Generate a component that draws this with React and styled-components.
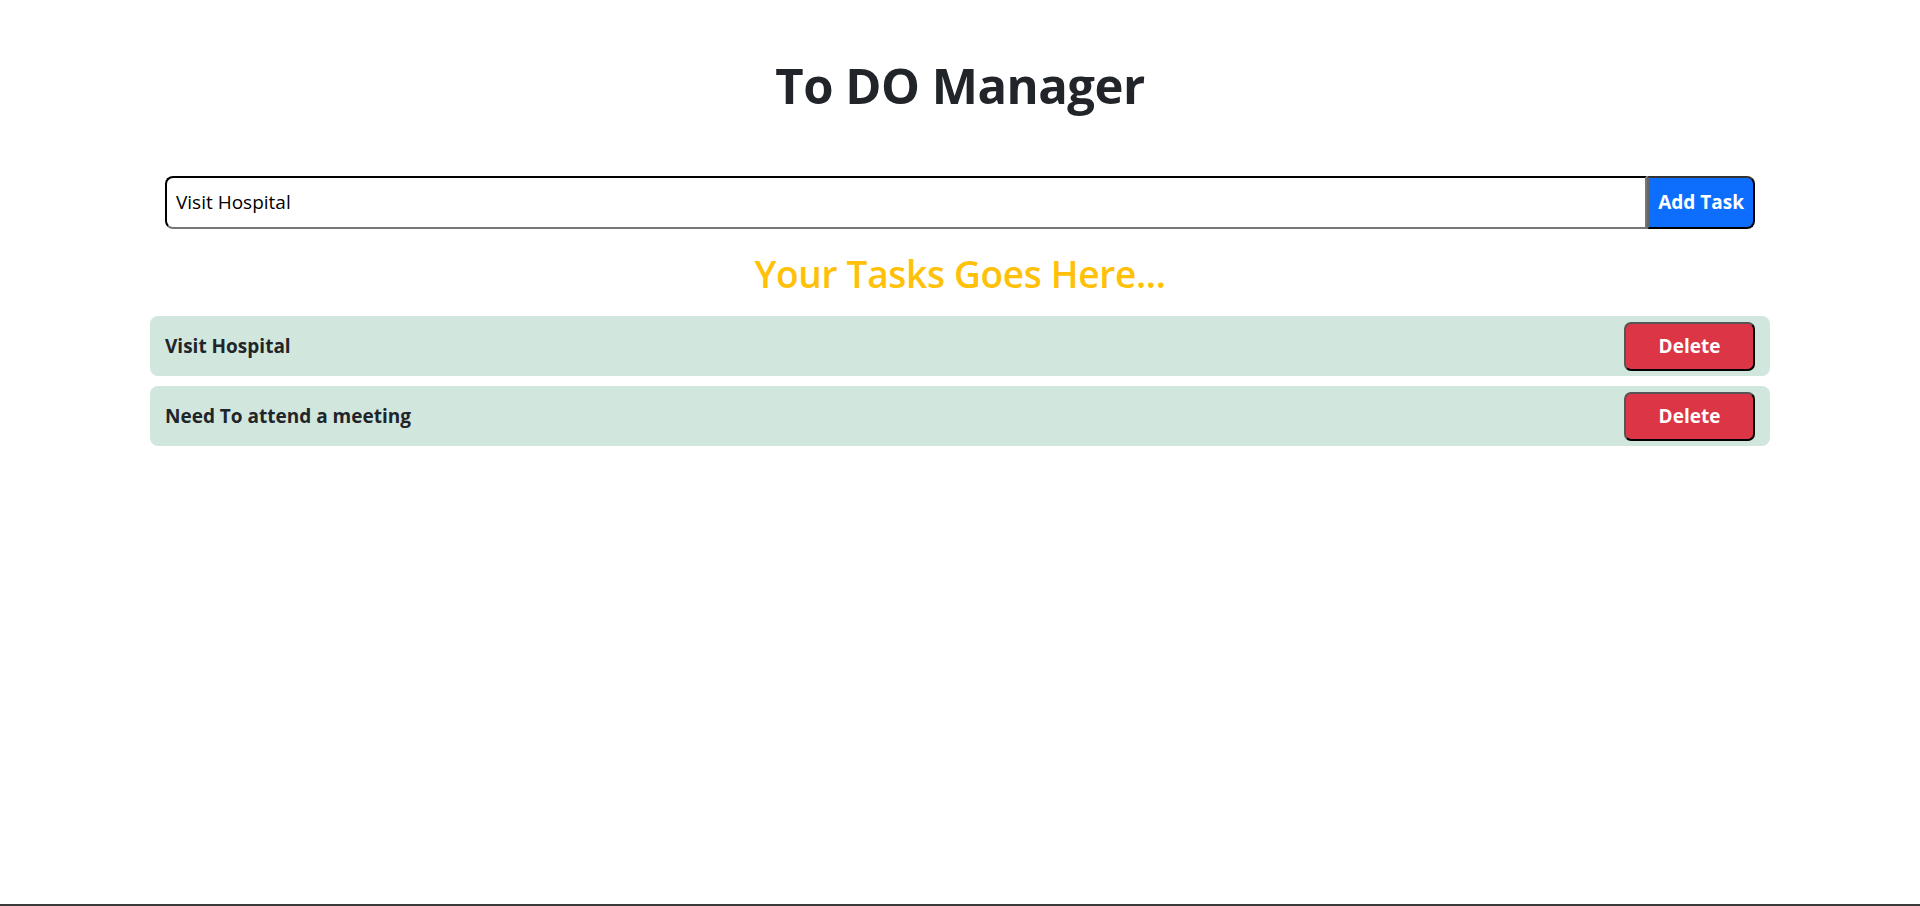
import React, { useState } from "react";
import styled, { createGlobalStyle } from "styled-components";

const GlobalStyle = createGlobalStyle`
  * {
    box-sizing: border-box;
  }
  body {
    margin: 0;
    font-family: "Open Sans", "Noto Sans", sans-serif;
    color: #212529;
    background: #fff;
  }
  #root {
    min-height: 100vh;
    border-bottom: 2px solid #3a3a3a;
  }
`;

const Container = styled.div`
  max-width: 1650px;
  margin: 0 auto;
  padding: 0 15px;
`;

const Title = styled.h1`
  margin: 0;
  padding-top: 56px;
  text-align: center;
  font-size: 49px;
  font-weight: 700;
  line-height: 1.2;
  letter-spacing: -0.5px;
`;

const InputGroup = styled.form`
  display: flex;
  margin: 61px 15px 0;
  height: 53px;
`;

const TaskInput = styled.input`
  flex: 1;
  min-width: 0;
  height: 100%;
  padding: 0 9px;
  font-family: inherit;
  font-size: 19px;
  color: #000;
  border: 2px inset #767676;
  border-top-color: #222;
  border-left-color: #222;
  border-radius: 8px 0 0 8px;
  outline: none;
`;

const AddButton = styled.button`
  height: 100%;
  padding: 0 9px;
  font-family: inherit;
  font-size: 19px;
  font-weight: 700;
  color: #fff;
  background: #0d6efd;
  border: 2px solid #000;
  border-left-color: #666;
  border-top-color: #333;
  border-radius: 0 8px 8px 0;
  cursor: pointer;
`;

const SubTitle = styled.h2`
  margin: 23px 0 20px;
  text-align: center;
  font-size: 37px;
  font-weight: 600;
  line-height: 1.2;
  color: #ffc107;
  letter-spacing: -0.3px;
`;

const List = styled.ul`
  list-style: none;
  margin: 0;
  padding: 0;
  display: flex;
  flex-direction: column;
  gap: 10px;
`;

const Row = styled.li`
  display: flex;
  align-items: center;
  justify-content: space-between;
  height: 60px;
  padding: 0 15px;
  background: #d1e7dd;
  border-radius: 8px;
`;

const TaskText = styled.span`
  font-size: 19px;
  font-weight: 700;
  color: #212529;
`;

const DeleteButton = styled.button`
  width: 131px;
  height: 49px;
  font-family: inherit;
  font-size: 19px;
  font-weight: 700;
  color: #fff;
  background: #dc3545;
  border: 2px solid #000;
  border-top-color: #555;
  border-left-color: #555;
  border-radius: 7px;
  cursor: pointer;
`;

export default () => {
  const [text, setText] = useState("Visit Hospital");
  const [tasks, setTasks] = useState([
    "Visit Hospital",
    "Need To attend a meeting",
  ]);

  const addTask = (e) => {
    e.preventDefault();
    if (text.trim()) setTasks([...tasks, text.trim()]);
  };

  return (
    <>
      <GlobalStyle />
      <Container>
        <Title>To DO Manager</Title>
        <InputGroup onSubmit={addTask}>
          <TaskInput value={text} onChange={(e) => setText(e.target.value)} />
          <AddButton type="submit">Add Task</AddButton>
        </InputGroup>
        <SubTitle>Your Tasks Goes Here...</SubTitle>
        <List>
          {tasks.map((task, i) => (
            <Row key={i}>
              <TaskText>{task}</TaskText>
              <DeleteButton
                onClick={() => setTasks(tasks.filter((_, j) => j !== i))}
              >
                Delete
              </DeleteButton>
            </Row>
          ))}
        </List>
      </Container>
    </>
  );
};
